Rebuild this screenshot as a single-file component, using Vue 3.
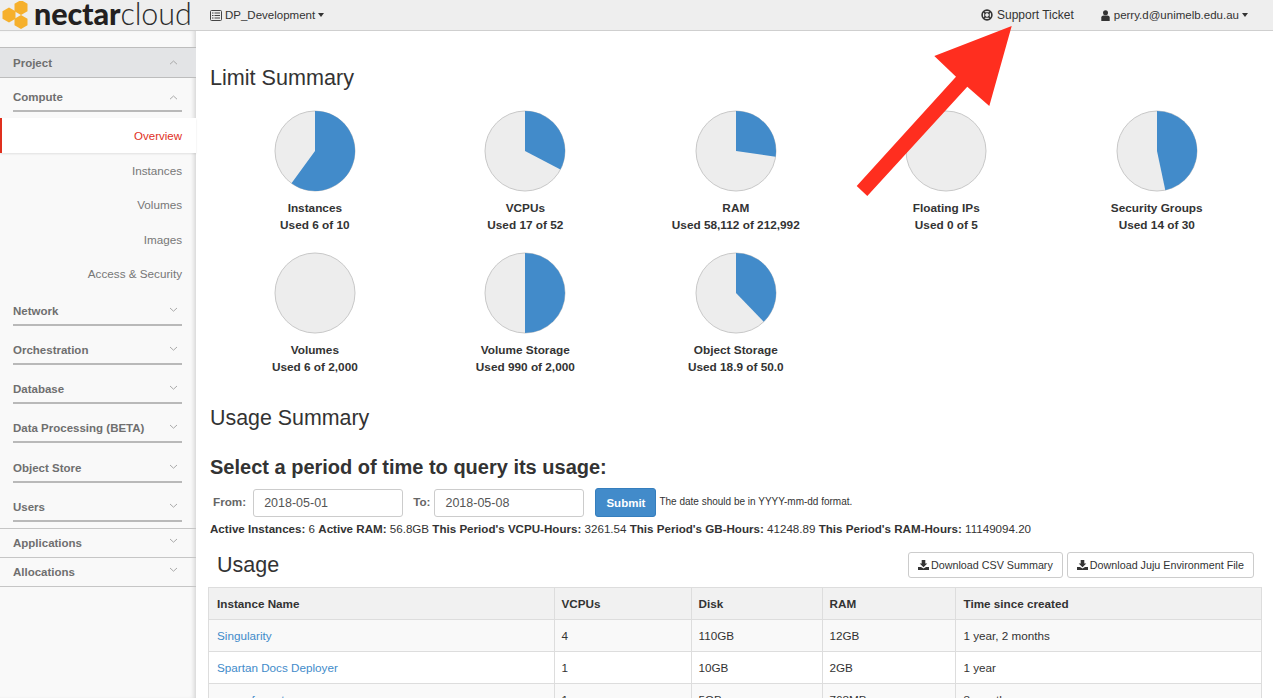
<script setup>
const polar = (p) => {
  const a = 2 * Math.PI * p - Math.PI / 2
  return [40 + 40 * Math.cos(a), 40 + 40 * Math.sin(a)]
}
const slice = (p) => {
  if (p <= 0) return ''
  const [x, y] = polar(p)
  return `M40 40 L40 0 A40 40 0 ${p > 0.5 ? 1 : 0} 1 ${x.toFixed(2)} ${y.toFixed(2)} Z`
}
const pies = [
  { name: 'Instances', used: 'Used 6 of 10', p: 0.6 },
  { name: 'VCPUs', used: 'Used 17 of 52', p: 17 / 52 },
  { name: 'RAM', used: 'Used 58,112 of 212,992', p: 58112 / 212992 },
  { name: 'Floating IPs', used: 'Used 0 of 5', p: 0 },
  { name: 'Security Groups', used: 'Used 14 of 30', p: 14 / 30 },
  { name: 'Volumes', used: 'Used 6 of 2,000', p: 0 },
  { name: 'Volume Storage', used: 'Used 990 of 2,000', p: 0.5 },
  { name: 'Object Storage', used: 'Used 18.9 of 50.0', p: 0.378 },
].map((d) => ({ ...d, path: slice(d.p) }))

const subItems = ['Instances', 'Volumes', 'Images', 'Access & Security']
const groups = ['Network', 'Orchestration', 'Database', 'Data Processing (BETA)', 'Object Store', 'Users']
const tops = ['Applications', 'Allocations']
const stats = [
  ['Active Instances:', '6'],
  ['Active RAM:', '56.8GB'],
  ["This Period's VCPU-Hours:", '3261.54'],
  ["This Period's GB-Hours:", '41248.89'],
  ["This Period's RAM-Hours:", '11149094.20'],
]
const rows = [
  ['Singularity', '4', '110GB', '12GB', '1 year, 2 months'],
  ['Spartan Docs Deployer', '1', '10GB', '2GB', '1 year'],
  ['space format', '1', '5GB', '768MB', '3 months'],
]
</script>

<template>
  <div class="page">
    <header class="topbar">
      <div class="brand">
        <svg class="hexes" width="29" height="28" viewBox="0 0 29 28">
          <polygon fill="#f6b02c" points="8,6.5 14.5,10.2 14.5,17.8 8,21.5 1.5,17.8 1.5,10.2" />
          <polygon fill="#f6b02c" points="20,-1 26.5,2.7 26.5,10.3 20,14 13.5,10.3 13.5,2.7" />
          <polygon fill="#f6b02c" points="20,14 26.5,17.7 26.5,24.3 20,28 13.5,24.3 13.5,17.7" />
        </svg>
        <span class="logo-text"><b>nectar</b><span>cloud</span></span>
      </div>
      <div class="project-pick">
        <svg width="12" height="11" viewBox="0 0 12 11" class="ico">
          <rect x="0.5" y="0.5" width="11" height="10" rx="1" fill="none" stroke="#444" />
          <path d="M2 3h1.5M2 5.5h1.5M2 8h1.5M4.5 3H10M4.5 5.5H10M4.5 8H10" stroke="#444" stroke-width="1.2" />
        </svg>
        <span>DP_Development</span><i class="caret"></i>
      </div>
      <div class="top-right">
        <div class="support">
          <svg width="12" height="12" viewBox="0 0 12 12" class="ico">
            <circle cx="6" cy="6" r="4.9" fill="none" stroke="#333" stroke-width="1.6" />
            <circle cx="6" cy="6" r="2.4" fill="none" stroke="#333" stroke-width="1" />
            <path d="M2.6 2.6l2 2M9.4 2.6l-2 2M2.6 9.4l2-2M9.4 9.4l-2-2" stroke="#333" stroke-width="1.6" />
          </svg>
          <span>Support Ticket</span>
        </div>
        <div class="user">
          <svg width="9" height="11" viewBox="0 0 9 11" class="ico">
            <circle cx="4.5" cy="2.7" r="2.5" fill="#333" />
            <path d="M0.3 11V7.6C0.3 6.2 1.4 5.4 2.6 5.4h3.8c1.2 0 2.3.8 2.3 2.2V11z" fill="#333" />
          </svg>
          <span>perry.d@unimelb.edu.au</span><i class="caret"></i>
        </div>
      </div>
    </header>

    <div class="body">
      <aside class="sidebar">
        <div class="project-row">
          <span>Project</span>
          <svg class="chev" width="9" height="5" viewBox="0 0 9 5"><path d="M1 4.2l3.5-3.2 3.5 3.2" /></svg>
        </div>
        <div class="group compute">
          <div class="group-head">
            <span>Compute</span>
            <svg class="chev" width="9" height="5" viewBox="0 0 9 5"><path d="M1 4.2l3.5-3.2 3.5 3.2" /></svg>
          </div>
        </div>
        <div class="sub active">Overview</div>
        <div class="subs">
          <div v-for="s in subItems" :key="s" class="sub">{{ s }}</div>
        </div>
        <div v-for="g in groups" :key="g" class="group">
          <div class="group-head">
            <span>{{ g }}</span>
            <svg class="chev up" width="9" height="5" viewBox="0 0 9 5"><path d="M1 1l3.5 3.2L8 1" /></svg>
          </div>
        </div>
        <div class="tops">
          <div v-for="t in tops" :key="t" class="top-item">
            <span>{{ t }}</span>
            <svg class="chev up" width="9" height="5" viewBox="0 0 9 5"><path d="M1 1l3.5 3.2L8 1" /></svg>
          </div>
        </div>
      </aside>

      <main class="main">
        <h2 class="limit-title">Limit Summary</h2>
        <div class="pies">
          <div v-for="d in pies" :key="d.name" class="pie-cell">
            <svg class="pie" width="82" height="82" viewBox="-1 -1 82 82">
              <circle cx="40" cy="40" r="40" fill="#ededed" stroke="#c8c8c8" stroke-width="1" />
              <path v-if="d.path" :d="d.path" fill="#428bca" />
            </svg>
            <div class="pie-name">{{ d.name }}</div>
            <div class="pie-used">{{ d.used }}</div>
          </div>
        </div>

        <h2 class="usage-title">Usage Summary</h2>
        <h3 class="period">Select a period of time to query its usage:</h3>
        <form class="query" @submit.prevent>
          <label class="lab-from">From:</label>
          <input class="date" value="2018-05-01" />
          <label class="lab-to">To:</label>
          <input class="date" value="2018-05-08" />
          <button class="submit" type="submit">Submit</button>
          <span class="hint">The date should be in YYYY-mm-dd format.</span>
        </form>
        <p class="stats">
          <span v-for="s in stats" :key="s[0]"><b>{{ s[0] }}</b> {{ s[1] }}&nbsp;</span>
        </p>

        <div class="usage-head">
          <h2 class="usage-h">Usage</h2>
          <div class="actions">
            <a class="btn">
              <svg width="11" height="10" viewBox="0 0 11 10" class="dl"><path d="M3.7 0h3.6v3.6h2L5.5 7.3 1.7 3.6h2zM0 7h3l2.5 1.5L8 7h3v3H0z" fill="#333" /></svg>
              Download CSV Summary
            </a>
            <a class="btn">
              <svg width="11" height="10" viewBox="0 0 11 10" class="dl"><path d="M3.7 0h3.6v3.6h2L5.5 7.3 1.7 3.6h2zM0 7h3l2.5 1.5L8 7h3v3H0z" fill="#333" /></svg>
              Download Juju Environment File
            </a>
          </div>
        </div>

        <table class="tbl">
          <colgroup>
            <col class="c1" /><col class="c2" /><col class="c3" /><col class="c4" /><col />
          </colgroup>
          <thead>
            <tr><th>Instance Name</th><th>VCPUs</th><th>Disk</th><th>RAM</th><th>Time since created</th></tr>
          </thead>
          <tbody>
            <tr v-for="r in rows" :key="r[0]">
              <td><a class="link">{{ r[0] }}</a></td>
              <td>{{ r[1] }}</td><td>{{ r[2] }}</td><td>{{ r[3] }}</td><td>{{ r[4] }}</td>
            </tr>
          </tbody>
        </table>
      </main>
    </div>

    <svg class="arrow" width="170" height="180" viewBox="0 0 170 180">
      <polygon fill="#ff2e1f" points="155.7,0 78.3,30 100,50.7 0.7,160 11.3,170 111.3,60.7 133.3,80" />
    </svg>
  </div>
</template>

<style>
html, body { margin: 0; height: 100%; overflow: hidden; background: #fff; }
</style>

<style scoped>
.page {
  position: relative;
  width: 1273px;
  height: 698px;
  overflow: hidden;
  font-family: "Liberation Sans", Arial, sans-serif;
  font-size: 12px;
  color: #333;
}
.topbar {
  display: flex;
  align-items: center;
  height: 30px;
  background: #eeeeee;
  border-bottom: 1px solid #cfcfcf;
}
.brand { display: flex; align-items: center; width: 210px; height: 30px; flex: none; }
.hexes { flex: none; margin-left: 1px; }
.logo-text {
  margin-left: 4px;
  margin-top: -5px;
  font-family: Lato, "Liberation Sans", sans-serif;
  font-size: 30.5px;
  line-height: 24px;
  color: #231f20;
  white-space: nowrap;
  letter-spacing: -0.1px;
}
.logo-text b { font-weight: 900; }
.logo-text span { font-weight: 300; color: #2b2b2b; }
.project-pick { display: flex; align-items: center; font-size: 11.5px; }
.ico { flex: none; margin-right: 3px; }
.caret {
  display: inline-block;
  width: 0; height: 0;
  margin-left: 3px;
  border-left: 3.5px solid transparent;
  border-right: 3.5px solid transparent;
  border-top: 4px solid #333;
}
.top-right { display: flex; align-items: center; margin-left: auto; margin-right: 25px; font-size: 11.5px; }
.support { display: flex; align-items: center; margin-right: 27px; font-size: 12px; }
.support .ico { margin-right: 4px; }
.user { display: flex; align-items: center; }
.user .ico { margin-right: 4px; }

.body { display: flex; height: 667px; }
.sidebar {
  width: 196px;
  flex: none;
  box-sizing: border-box;
  padding-top: 16px;
  background: #f9f9f9;
  box-shadow: inset -4px 0 4px -2px rgba(0, 0, 0, 0.14);
  font-weight: bold;
  font-size: 11.5px;
  color: #6f6f6f;
}
.project-row {
  display: flex;
  align-items: center;
  justify-content: space-between;
  box-sizing: border-box;
  height: 31px;
  padding: 0 18px 0 13px;
  background: #e3e4e6;
  border-top: 1px solid #bdbdbd;
  border-bottom: 1px solid #bdbdbd;
}
.chev { fill: none; stroke: #a9a9a9; stroke-width: 1; flex: none; }
.chev.up { margin-top: -4px; }
.group { margin: 0 14px 5.8px 13px; }
.group.compute { margin-bottom: 6.5px; }
.group-head {
  display: flex;
  align-items: center;
  justify-content: space-between;
  box-sizing: border-box;
  height: 33.5px;
  padding: 10.5px 4px 4px 0;
  line-height: 17px;
  border-bottom: 2px solid #b9b9b9;
}
.subs { margin-bottom: 1.5px; }
.sub {
  box-sizing: border-box;
  height: 34.5px;
  padding: 1px 14px 0 0;
  line-height: 34.5px;
  text-align: right;
  font-weight: normal;
  font-size: 11.7px;
  color: #777;
}
.sub.active {
  background: #fff;
  color: #e0301e;
  border-left: 2px solid #e0301e;
  box-shadow: 0 1px 2px rgba(0, 0, 0, 0.1);
  font-size: 11.5px;
}
.tops { border-top: 1px solid #c6c6c6; }
.top-item {
  display: flex;
  align-items: center;
  justify-content: space-between;
  box-sizing: border-box;
  height: 29px;
  padding: 0 18px 0 13px;
  border-bottom: 1px solid #c6c6c6;
}

.main { flex: 1; min-width: 0; padding: 0 11px 0 14px; }
h2, h3, p { margin: 0; font-weight: normal; }
.limit-title { margin-top: 34px; font-size: 21.6px; line-height: 26px; color: #333; }
.pies {
  display: grid;
  grid-template-columns: repeat(5, 1fr);
  grid-auto-rows: 142px;
  margin: 19px 0 0 -0.4px;
}
.pie-cell { display: flex; flex-direction: column; align-items: center; }
.pie { display: block; margin-bottom: 8px; }
.pie-name, .pie-used { font-weight: bold; line-height: 17px; font-size: 11.8px; color: #333; }
.usage-title { margin-top: 11px; font-size: 21.4px; line-height: 26px; }
.period { margin-top: 23px; font-size: 20px; line-height: 26px; font-weight: bold; color: #333; }
.query { display: flex; align-items: center; height: 29px; margin-top: 8px; }
.query label { font-weight: bold; color: #666; margin-top: -3px; font-size: 11.7px; }
.lab-from { margin-left: 3px; margin-right: 7px; }
.lab-to { margin-left: 10px; margin-right: 4px; }
.date {
  box-sizing: border-box;
  width: 150px;
  height: 28px;
  padding: 0 10px;
  border: 1px solid #ccc;
  border-radius: 3px;
  background: #fff;
  font: 12.5px "Liberation Sans", Arial, sans-serif;
  color: #555;
  outline: none;
}
.submit {
  box-sizing: border-box;
  width: 61px;
  height: 29px;
  margin-left: 11px;
  border: 1px solid #357ebd;
  border-radius: 3px;
  background: #428bca;
  color: #fff;
  font: bold 11.5px "Liberation Sans", Arial, sans-serif;
  padding: 0;
}
.hint { margin-left: 3px; margin-top: -3px; font-size: 10px; color: #333; white-space: nowrap; }
.stats { margin-top: 3px; line-height: 17px; font-size: 11.6px; white-space: nowrap; color: #333; }
.usage-head {
  display: flex;
  align-items: center;
  justify-content: space-between;
  height: 26px;
  margin-top: 15px;
  padding: 0 8px 0 7px;
}
.usage-h { font-size: 21.5px; line-height: 26px; }
.actions { display: flex; gap: 4px; }
.btn {
  display: flex;
  align-items: center;
  box-sizing: border-box;
  height: 26px;
  padding: 0 9px;
  border: 1px solid #ccc;
  border-radius: 3px;
  background: #fff;
  font-size: 10.75px;
  color: #333;
  white-space: nowrap;
}
.dl { margin-right: 2px; }
.tbl {
  margin-top: 9px;
  margin-left: -2px;
  width: 1054px;
  border-collapse: collapse;
  table-layout: fixed;
  font-size: 11.7px;
}
.c1 { width: 346px; }
.c2 { width: 137px; }
.c3 { width: 131px; }
.c4 { width: 133px; }
.tbl th, .tbl td {
  box-sizing: border-box;
  height: 32px;
  padding: 0 7px 0 6.5px;
  border: 1px solid #dddddd;
  text-align: left;
  color: #333;
}
.tbl th { background: #f1f1f1; font-weight: bold; }
.tbl th:first-child, .tbl td:first-child { padding-left: 8px; }
.tbl th:last-child, .tbl td:last-child { padding-left: 7.5px; }
.tbl tbody tr:nth-child(odd) td { background: #f9f9f9; }
.link { color: #428bca; }
.arrow { position: absolute; left: 856px; top: 26px; pointer-events: none; }
</style>
